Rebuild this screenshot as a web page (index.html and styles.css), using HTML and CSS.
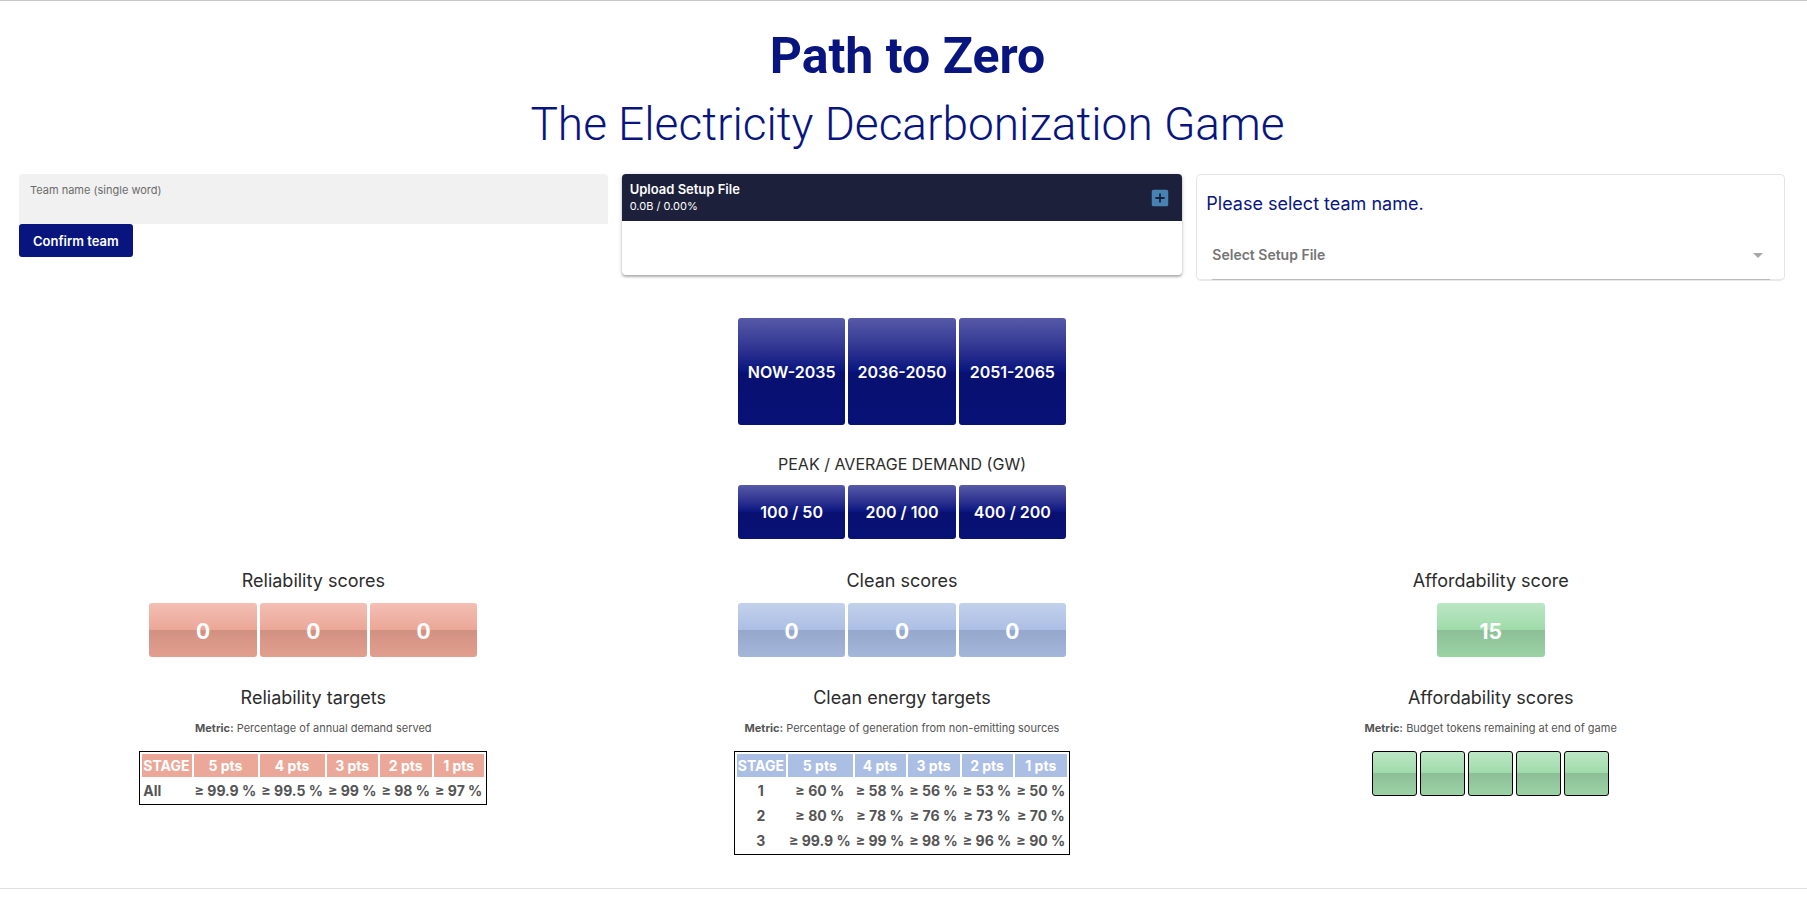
FILE: index.html
```html
<!DOCTYPE html>
<html lang="en">
<head>
<meta charset="utf-8">
<meta name="viewport" content="width=device-width, initial-scale=1">
<title>Path to Zero</title>
<link rel="stylesheet" href="styles.css">
</head>
<body>
<header class="masthead">
  <h1 class="masthead-title">Path to Zero</h1>
  <p class="masthead-subtitle">The Electricity Decarbonization Game</p>
</header>
<main class="board">
  <section class="columns setup">
    <form class="team">
      <div class="field">
        <label class="field-label" for="team-name">Team name (single word)</label>
        <input class="field-input" id="team-name" type="text">
      </div>
      <button class="confirm" type="button">Confirm team</button>
    </form>
    <div class="uploader">
      <div class="uploader-head">
        <div class="uploader-text">
          <h2 class="uploader-title">Upload Setup File</h2>
          <p class="uploader-status">0.0B / 0.00%</p>
        </div>
        <button class="uploader-add" type="button" aria-label="Add file">
          <svg width="22" height="22" viewBox="0 0 24 24" aria-hidden="true"><path fill="currentColor" fill-rule="evenodd" d="M19 3H5a2 2 0 0 0-2 2v14a2 2 0 0 0 2 2h14a2 2 0 0 0 2-2V5a2 2 0 0 0-2-2zm-2 10h-4v4h-2v-4H7v-2h4V7h2v4h4v2z"/></svg>
        </button>
      </div>
    </div>
    <div class="picker">
      <p class="picker-message">Please select team name.</p>
      <div class="picker-field">
        <select class="picker-select" aria-label="Select Setup File" disabled>
          <option>Select Setup File</option>
        </select>
        <svg class="picker-arrow" width="24" height="24" viewBox="0 0 24 24" aria-hidden="true"><path fill="currentColor" d="M7 10l5 5 5-5z"/></svg>
      </div>
    </div>
  </section>

  <section class="stages">
    <div class="tiles">
      <div class="tile tile-square navy">NOW-2035</div>
      <div class="tile tile-square navy">2036-2050</div>
      <div class="tile tile-square navy">2051-2065</div>
    </div>
    <h2 class="demand-title">PEAK / AVERAGE DEMAND (GW)</h2>
    <div class="tiles">
      <div class="tile navy">100 / 50</div>
      <div class="tile navy">200 / 100</div>
      <div class="tile navy">400 / 200</div>
    </div>
  </section>

  <section class="columns">
    <div class="score">
      <h2 class="heading">Reliability scores</h2>
      <div class="tiles">
        <div class="tile tile-score coral">0</div>
        <div class="tile tile-score coral">0</div>
        <div class="tile tile-score coral">0</div>
      </div>
      <h2 class="heading heading-targets">Reliability targets</h2>
      <p class="metric"><b>Metric:</b> Percentage of annual demand served</p>
      <table class="targets targets-coral">
        <thead><tr><th>STAGE</th><th>5 pts</th><th>4 pts</th><th>3 pts</th><th>2 pts</th><th>1 pts</th></tr></thead>
        <tbody><tr><td class="stage-all">All</td><td>≥ 99.9 %</td><td>≥ 99.5 %</td><td>≥ 99 %</td><td>≥ 98 %</td><td>≥ 97 %</td></tr></tbody>
      </table>
    </div>
    <div class="score">
      <h2 class="heading">Clean scores</h2>
      <div class="tiles">
        <div class="tile tile-score blue">0</div>
        <div class="tile tile-score blue">0</div>
        <div class="tile tile-score blue">0</div>
      </div>
      <h2 class="heading heading-targets">Clean energy targets</h2>
      <p class="metric"><b>Metric:</b> Percentage of generation from non-emitting sources</p>
      <table class="targets targets-blue">
        <thead><tr><th>STAGE</th><th>5 pts</th><th>4 pts</th><th>3 pts</th><th>2 pts</th><th>1 pts</th></tr></thead>
        <tbody>
          <tr><td>1</td><td>≥ 60 %</td><td>≥ 58 %</td><td>≥ 56 %</td><td>≥ 53 %</td><td>≥ 50 %</td></tr>
          <tr><td>2</td><td>≥ 80 %</td><td>≥ 78 %</td><td>≥ 76 %</td><td>≥ 73 %</td><td>≥ 70 %</td></tr>
          <tr><td>3</td><td>≥ 99.9 %</td><td>≥ 99 %</td><td>≥ 98 %</td><td>≥ 96 %</td><td>≥ 90 %</td></tr>
        </tbody>
      </table>
    </div>
    <div class="score">
      <h2 class="heading">Affordability score</h2>
      <div class="tiles tiles-single">
        <div class="tile tile-score green">15</div>
      </div>
      <h2 class="heading heading-targets">Affordability scores</h2>
      <p class="metric"><b>Metric:</b> Budget tokens remaining at end of game</p>
      <div class="tokens">
        <span class="token green"></span>
        <span class="token green"></span>
        <span class="token green"></span>
        <span class="token green"></span>
        <span class="token green"></span>
      </div>
    </div>
  </section>
</main>
<hr class="divider">
</body>
</html>
```

FILE: styles.css
```css
* {
  box-sizing: border-box;
}

body {
  margin: 0;
  border-top: 1px solid #c8c8c8;
  background: #fff;
  color: #2c2c2c;
  font-family: Inter, "Liberation Sans", sans-serif;
}

h1,
h2,
p {
  margin: 0;
  font-weight: 400;
}

button,
input,
select {
  font: inherit;
}

.masthead {
  padding: 21px 0 0 8px;
  color: #08157f;
  font-family: Roboto, Inter, sans-serif;
  text-align: center;
}

.masthead-title {
  font-size: 50px;
  font-weight: 700;
  line-height: 68px;
}

.masthead-subtitle {
  font-size: 46px;
  font-weight: 300;
  line-height: 68px;
}

.board {
  padding: 16px 22px 0 19px;
}

.columns {
  display: grid;
  grid-template-columns: repeat(3, 1fr);
  align-items: start;
}

.field {
  display: flex;
  flex-direction: column;
  height: 50px;
  padding: 8px 11px 4px;
  border-radius: 4px 4px 0 0;
  background: #f1f1f1;
}

.field-label {
  color: #6b6b6b;
  font-size: 11px;
  line-height: 16px;
}

.field-input {
  flex: 1;
  min-height: 0;
  padding: 0;
  border: 0;
  outline: 0;
  background: transparent;
}

.confirm {
  display: block;
  height: 33px;
  padding: 0 14px;
  border: 0;
  border-radius: 3px;
  background: #08157f;
  color: #fff;
  font-size: 13px;
  font-weight: 600;
}

.uploader {
  height: 101px;
  margin: 0 14px;
  border-radius: 4px;
  overflow: hidden;
  box-shadow: 0 1px 4px rgba(0, 0, 0, 0.2), 0 2px 2px rgba(0, 0, 0, 0.2);
}

.uploader-head {
  display: flex;
  align-items: center;
  justify-content: space-between;
  height: 47px;
  padding: 0 11px 0 8px;
  background: #1c203a;
  color: #fff;
}

.uploader-title {
  font-size: 13px;
  font-weight: 600;
  line-height: 17px;
}

.uploader-status {
  font-size: 11px;
  line-height: 16px;
}

.uploader-add {
  display: flex;
  padding: 0;
  border: 0;
  background: transparent;
  color: #4682b4;
}

.picker {
  height: 107px;
  padding: 15px 14px 0 9px;
  border: 1px solid #e4e4e4;
  border-bottom: 2px solid #e8e8e8;
  border-radius: 5px;
}

.picker-message {
  color: #08157f;
  font-size: 18px;
  line-height: 28px;
}

.picker-field {
  display: grid;
  align-items: center;
  margin: 13px 0 0 6px;
  border-bottom: 1px solid #bababa;
}

.picker-select {
  grid-area: 1 / 1;
  height: 48px;
  padding: 0 0 2px;
  border: 0;
  background: transparent;
  color: #757575;
  font-size: 14px;
  font-weight: 600;
  opacity: 1;
  appearance: none;
}

.picker-arrow {
  grid-area: 1 / 1;
  justify-self: end;
  color: #a8a8a8;
  pointer-events: none;
}

.stages {
  padding-top: 37px;
}

.tiles {
  display: grid;
  grid-template-columns: repeat(3, 1fr);
  gap: 3px;
  max-width: 328px;
  margin: 0 auto;
}

.tiles-single {
  grid-template-columns: 1fr;
  max-width: 108px;
}

.tile {
  display: flex;
  align-items: center;
  justify-content: center;
  height: 54px;
  border-radius: 3px;
  color: #fff;
  font-size: 16px;
  font-weight: 600;
}

.tile-square {
  height: 107px;
}

.tile-score {
  padding-top: 2px;
  font-size: 21px;
  font-weight: 700;
}

.navy {
  background: linear-gradient(#575aa8, #2d3290 30%, #08157f 50%, #081071 51%, #081176);
}

.coral {
  background: linear-gradient(#f3bfb4, #eba797 50%, #d19182 50%, #e29f8f);
}

.blue {
  background: linear-gradient(#c3d1eb, #abbee4 50%, #95a7ca 50%, #a4b7da);
}

.green {
  background: linear-gradient(#bce6c4, #9fdbaa 50%, #8dbf97 50%, #9bd3a5);
}

.demand-title {
  margin: 29px 0 10px;
  font-size: 16px;
  line-height: 21px;
  text-align: center;
}

.score {
  padding-top: 28px;
  text-align: center;
}

.heading {
  margin-bottom: 9px;
  font-size: 18px;
  line-height: 27px;
}

.heading-targets {
  margin: 27px 0 0;
}

.metric {
  margin: 9px 0 15px;
  color: #555;
  font-size: 11px;
  line-height: 16px;
}

.metric b {
  font-weight: 700;
}

.targets {
  margin: 0 auto;
  border: 1px solid #000;
  border-spacing: 2px;
  color: #555;
  font-size: 14px;
  font-weight: 700;
  line-height: 21px;
}

.targets th,
.targets td {
  padding: 1px 2px 1px 1px;
  white-space: nowrap;
}

.targets th {
  color: #fff;
  font-weight: 700;
}

.targets .stage-all {
  text-align: left;
}

.targets-coral th {
  background: #eba797;
}

.targets-blue th {
  background: #abbee4;
}

.tokens {
  display: flex;
  justify-content: center;
  gap: 3px;
}

.token {
  width: 45px;
  height: 45px;
  border: 1px solid #000;
  border-radius: 3px;
}

.divider {
  height: 1px;
  margin: 33px 0 0;
  border: 0;
  background: #e0e0e0;
}
```
